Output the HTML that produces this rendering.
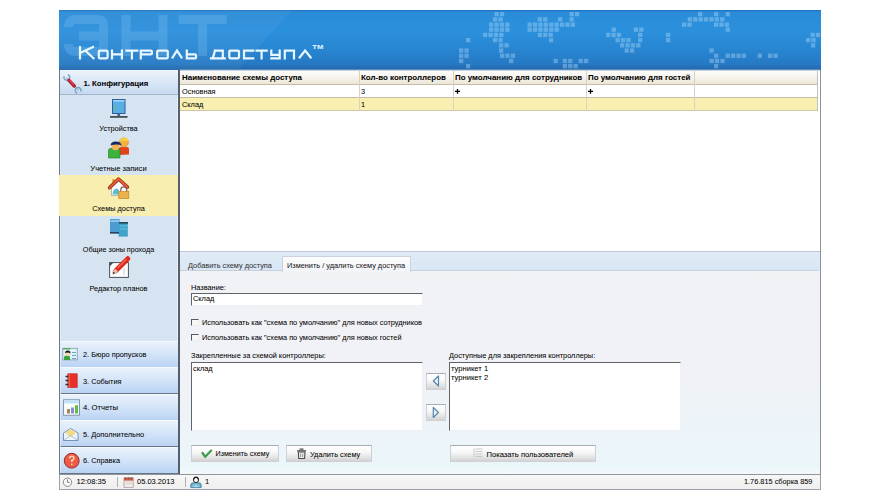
<!DOCTYPE html>
<html><head><meta charset="utf-8">
<style>
*{margin:0;padding:0;box-sizing:border-box}
html,body{width:880px;height:500px;overflow:hidden;background:#fff;font-family:"Liberation Sans",sans-serif;color:#111}
.a{position:absolute}
.t{position:absolute;white-space:nowrap;font-size:7.35px;line-height:9px;color:#000;-webkit-text-stroke:0.04px #000}
.b{font-weight:bold;font-size:7.95px}
.c{left:59px;width:119px;text-align:center}
#win{left:59px;top:10px;width:762px;height:480px;background:#f0f2f7;border:1px solid #8a9199;border-top:none}
#hdr{left:59px;top:10px;width:762px;height:60px;background:linear-gradient(#1f72bb 0,#2a8cd8 2px,#2b90dc 35%,#2886d2 65%,#2679c4 90%,#236fb6 95%,#2068ac 100%);overflow:hidden}
#side{left:59px;top:70px;width:119px;height:404px;background:#d6e3f0}
#sideline{left:178px;top:70px;width:2px;height:404px;background:#56606c}
#cfg{left:59px;top:70px;width:119px;height:25px;background:linear-gradient(#edf3fb,#dce8f6 45%,#c6d9f0);border-bottom:1px solid #a3b6ce}
.btn{position:absolute;left:59px;width:119px;height:27px;background:linear-gradient(#e9f1fb,#d8e7f9 40%,#bad3f3);border-top:1px solid #f6f9fd;border-bottom:1px solid #687585}
#grid{left:180px;top:70px;width:640px;height:182px;background:#fff;border-bottom:1px solid #bfc8d4}
.gh{position:absolute;top:71px;height:14px;background:linear-gradient(#fdfdfb,#f6f3ec 50%,#ece6d8);border-bottom:1px solid #c5bca4}
.gsep{position:absolute;width:1px;background:#d6d2c4}
#tabs{left:180px;top:252px;width:640px;height:19px;background:linear-gradient(#e1ebf7,#d9e6f5)}
#form{left:180px;top:271px;width:640px;height:203px;background:linear-gradient(#f1f2f6 0,#f0f2f7 110px,#ecf4f9 158px,#ebf6fa 195px,#f3f8fa 100%)}
#status{left:59px;top:474px;width:762px;height:16px;background:linear-gradient(#f7f7f7,#efefef);border:1px solid #9aa1a8;border-top-color:#8e959c}
.tb{position:absolute;background:#fff;border:1px solid #eef0f3;border-top:1px solid #5f646a;border-left:1px solid #5f646a}
.pb{position:absolute;height:16px;border:1px solid #cdd0d4;border-top-color:#a9adb3;background:linear-gradient(#ffffff,#f8f8f8 40%,#e4e4e4 75%,#d2d2d2);}
.cb{position:absolute;width:8px;height:7px;background:#f7f7f8;border:1px solid #eceef2;border-top-color:#55595e;border-left-color:#55595e}
</style></head><body>
<div class="a" id="win"></div>
<div class="a" id="hdr"></div>
<svg class="a" style="left:59px;top:10px" width="762" height="60" viewBox="59 10 762 60">
 <defs><linearGradient id="hg" x1="0" y1="0" x2="1" y2="0"><stop offset="0" stop-color="#fff" stop-opacity="0.05"/><stop offset="0.5" stop-color="#fff" stop-opacity="0.0"/></linearGradient></defs>
 <path d="M59 10 H292 L238 70 H59 Z" fill="#ffffff" fill-opacity="0.045"/>
 <g fill="none" stroke="#86c6f4" opacity="0.27" stroke-width="9" stroke-linejoin="round">
  <path d="M68.5 27 Q68.5 19.5 76 19.5 H98 Q103.5 19.5 103.5 25 V46 Q103.5 51.5 98 51.5 H76 Q68.5 51.5 68.5 44"/>
  <path d="M79 36 H103"/>
  <path d="M126 15 V56 M163 15 V56 M126 36 H163"/>
  <path d="M178.6 19.5 H226.7 M202.6 15 V56" stroke-linejoin="miter"/>
 </g>
 <g fill="#a9d6f8" fill-opacity="0.42">
<rect x="494.5" y="12.0" width="4.3" height="4.3"/>
<rect x="499.9" y="12.0" width="4.3" height="4.3"/>
<rect x="569.5" y="12.0" width="4.3" height="4.3"/>
<rect x="574.9" y="12.0" width="4.3" height="4.3"/>
<rect x="698.0" y="12.0" width="4.3" height="4.3"/>
<rect x="714.0" y="12.0" width="4.3" height="4.3"/>
<rect x="725.6" y="12.0" width="4.3" height="4.3"/>
<rect x="493.0" y="17.2" width="4.3" height="4.3"/>
<rect x="498.4" y="17.2" width="4.3" height="4.3"/>
<rect x="537.7" y="17.2" width="4.3" height="4.3"/>
<rect x="543.1" y="17.2" width="4.3" height="4.3"/>
<rect x="558.0" y="17.2" width="4.3" height="4.3"/>
<rect x="569.5" y="17.2" width="4.3" height="4.3"/>
<rect x="687.7" y="17.2" width="4.3" height="4.3"/>
<rect x="693.1" y="17.2" width="4.3" height="4.3"/>
<rect x="698.5" y="17.2" width="4.3" height="4.3"/>
<rect x="703.9" y="17.2" width="4.3" height="4.3"/>
<rect x="709.3" y="17.2" width="4.3" height="4.3"/>
<rect x="714.7" y="17.2" width="4.3" height="4.3"/>
<rect x="720.1" y="17.2" width="4.3" height="4.3"/>
<rect x="489.0" y="22.5" width="4.3" height="4.3"/>
<rect x="494.4" y="22.5" width="4.3" height="4.3"/>
<rect x="499.8" y="22.5" width="4.3" height="4.3"/>
<rect x="505.2" y="22.5" width="4.3" height="4.3"/>
<rect x="527.5" y="22.5" width="4.3" height="4.3"/>
<rect x="532.9" y="22.5" width="4.3" height="4.3"/>
<rect x="538.3" y="22.5" width="4.3" height="4.3"/>
<rect x="543.7" y="22.5" width="4.3" height="4.3"/>
<rect x="549.1" y="22.5" width="4.3" height="4.3"/>
<rect x="554.5" y="22.5" width="4.3" height="4.3"/>
<rect x="559.9" y="22.5" width="4.3" height="4.3"/>
<rect x="565.3" y="22.5" width="4.3" height="4.3"/>
<rect x="570.7" y="22.5" width="4.3" height="4.3"/>
<rect x="682.0" y="22.5" width="4.3" height="4.3"/>
<rect x="687.4" y="22.5" width="4.3" height="4.3"/>
<rect x="714.0" y="22.5" width="4.3" height="4.3"/>
<rect x="719.4" y="22.5" width="4.3" height="4.3"/>
<rect x="724.8" y="22.5" width="4.3" height="4.3"/>
<rect x="489.0" y="27.5" width="4.3" height="4.3"/>
<rect x="494.4" y="27.5" width="4.3" height="4.3"/>
<rect x="499.8" y="27.5" width="4.3" height="4.3"/>
<rect x="505.2" y="27.5" width="4.3" height="4.3"/>
<rect x="527.5" y="27.5" width="4.3" height="4.3"/>
<rect x="532.9" y="27.5" width="4.3" height="4.3"/>
<rect x="538.3" y="27.5" width="4.3" height="4.3"/>
<rect x="543.7" y="27.5" width="4.3" height="4.3"/>
<rect x="549.1" y="27.5" width="4.3" height="4.3"/>
<rect x="554.5" y="27.5" width="4.3" height="4.3"/>
<rect x="611.6" y="27.5" width="4.3" height="4.3"/>
<rect x="633.8" y="27.5" width="4.3" height="4.3"/>
<rect x="639.2" y="27.5" width="4.3" height="4.3"/>
<rect x="725.6" y="27.5" width="4.3" height="4.3"/>
<rect x="483.0" y="32.8" width="4.3" height="4.3"/>
<rect x="488.4" y="32.8" width="4.3" height="4.3"/>
<rect x="493.8" y="32.8" width="4.3" height="4.3"/>
<rect x="499.2" y="32.8" width="4.3" height="4.3"/>
<rect x="537.7" y="32.8" width="4.3" height="4.3"/>
<rect x="543.1" y="32.8" width="4.3" height="4.3"/>
<rect x="548.5" y="32.8" width="4.3" height="4.3"/>
<rect x="606.0" y="32.8" width="4.3" height="4.3"/>
<rect x="611.4" y="32.8" width="4.3" height="4.3"/>
<rect x="616.8" y="32.8" width="4.3" height="4.3"/>
<rect x="638.0" y="32.8" width="4.3" height="4.3"/>
<rect x="666.0" y="32.8" width="4.3" height="4.3"/>
<rect x="810.5" y="32.8" width="4.3" height="4.3"/>
<rect x="815.9" y="32.8" width="4.3" height="4.3"/>
<rect x="466.0" y="38.0" width="4.3" height="4.3"/>
<rect x="493.0" y="38.0" width="4.3" height="4.3"/>
<rect x="498.4" y="38.0" width="4.3" height="4.3"/>
<rect x="549.0" y="38.0" width="4.3" height="4.3"/>
<rect x="615.5" y="38.0" width="4.3" height="4.3"/>
<rect x="620.9" y="38.0" width="4.3" height="4.3"/>
<rect x="626.3" y="38.0" width="4.3" height="4.3"/>
<rect x="638.0" y="38.0" width="4.3" height="4.3"/>
<rect x="666.0" y="38.0" width="4.3" height="4.3"/>
<rect x="806.0" y="38.0" width="4.3" height="4.3"/>
<rect x="811.4" y="38.0" width="4.3" height="4.3"/>
<rect x="499.0" y="43.2" width="4.3" height="4.3"/>
<rect x="504.4" y="43.2" width="4.3" height="4.3"/>
<rect x="620.0" y="43.2" width="4.3" height="4.3"/>
<rect x="625.4" y="43.2" width="4.3" height="4.3"/>
<rect x="630.8" y="43.2" width="4.3" height="4.3"/>
<rect x="636.2" y="43.2" width="4.3" height="4.3"/>
<rect x="811.0" y="43.2" width="4.3" height="4.3"/>
<rect x="459.0" y="48.4" width="4.3" height="4.3"/>
<rect x="464.4" y="48.4" width="4.3" height="4.3"/>
<rect x="499.0" y="48.4" width="4.3" height="4.3"/>
<rect x="624.6" y="48.4" width="4.3" height="4.3"/>
<rect x="630.0" y="48.4" width="4.3" height="4.3"/>
<rect x="709.5" y="48.4" width="4.3" height="4.3"/>
<rect x="459.0" y="53.6" width="4.3" height="4.3"/>
<rect x="464.4" y="53.6" width="4.3" height="4.3"/>
<rect x="500.0" y="53.6" width="4.3" height="4.3"/>
<rect x="505.4" y="53.6" width="4.3" height="4.3"/>
<rect x="510.8" y="53.6" width="4.3" height="4.3"/>
<rect x="714.0" y="53.6" width="4.3" height="4.3"/>
<rect x="725.6" y="53.6" width="4.3" height="4.3"/>
<rect x="731.0" y="53.6" width="4.3" height="4.3"/>
<rect x="736.4" y="53.6" width="4.3" height="4.3"/>
<rect x="741.8" y="53.6" width="4.3" height="4.3"/>
<rect x="757.7" y="53.6" width="4.3" height="4.3"/>
<rect x="768.0" y="53.6" width="4.3" height="4.3"/>
<rect x="773.4" y="53.6" width="4.3" height="4.3"/>
<rect x="459.0" y="58.8" width="4.3" height="4.3"/>
<rect x="509.0" y="58.8" width="4.3" height="4.3"/>
<rect x="553.6" y="58.8" width="4.3" height="4.3"/>
<rect x="562.7" y="58.8" width="4.3" height="4.3"/>
<rect x="568.1" y="58.8" width="4.3" height="4.3"/>
<rect x="578.6" y="58.8" width="4.3" height="4.3"/>
<rect x="584.0" y="58.8" width="4.3" height="4.3"/>
<rect x="709.5" y="58.8" width="4.3" height="4.3"/>
<rect x="714.9" y="58.8" width="4.3" height="4.3"/>
<rect x="720.3" y="58.8" width="4.3" height="4.3"/>
<rect x="466.0" y="64.0" width="4.3" height="4.3"/>
<rect x="562.7" y="64.0" width="4.3" height="4.3"/>
<rect x="568.1" y="64.0" width="4.3" height="4.3"/>
<rect x="573.5" y="64.0" width="4.3" height="4.3"/>
<rect x="714.0" y="64.0" width="4.3" height="4.3"/>
 </g>
 <g fill="none" stroke="#e6f7ff" stroke-width="2.2" stroke-linejoin="miter" stroke-linecap="square">
  <path d="M80 47 V58.3 M80 53 L93 47 M85.5 50.8 L93.5 58.3"/>
  <rect x="98.8" y="50.6" width="8.8" height="7.7" rx="1"/>
  <path d="M112 50.6 V58.3 M121.9 50.6 V58.3 M112 54.4 H121.9"/>
  <path d="M126.5 50.6 H137.3 M131.9 50.6 V58.3"/>
  <path d="M140.8 58.3 V50.6 H150.9 Q151.9 50.6 151.9 51.6 V53.4 Q151.9 54.4 150.9 54.4 H140.8"/>
  <rect x="157.2" y="50.6" width="10.6" height="7.7" rx="1"/>
  <path d="M172 58.3 L177 50.6 L182.1 58.3" stroke-linecap="butt"/>
  <path d="M186.8 50.6 V58.3 H195.2 Q196 58.3 196 57.5 V55.2 Q196 54.4 195.2 54.4 H186.8"/>
  <path d="M211 58.3 H224.8 M222.8 50.6 V58.3 M215 50.6 H222.8 M215 50.6 L212.8 58.3"/>
  <rect x="229.3" y="50.6" width="9.7" height="7.7" rx="1"/>
  <path d="M253.2 50.6 H244 V58.3 H253.2"/>
  <path d="M256.5 50.6 H266.7 M261.6 50.6 V58.3"/>
  <path d="M271.3 50.6 V54.8 H279.7 M279.7 50.6 V58.3 H271.3"/>
  <path d="M284.8 58.3 V50.6 H294 V58.3"/>
  <path d="M299 58.3 L305.1 50.6 L311.3 58.3" stroke-linecap="butt"/>
 </g>
 <text x="312.3" y="49" fill="#e6f7ff" font-family="Liberation Sans" font-weight="bold" font-size="5.6" textLength="11" lengthAdjust="spacingAndGlyphs">TM</text>
</svg>
<div class="a" id="side"></div>
<div class="a" id="sideline"></div>
<div class="a" style="left:177px;top:95px;width:1px;height:379px;background:#eef3f9;opacity:0.8"></div>

<div class="a" id="cfg"></div>
<div class="t b" style="left:83.5px;top:78.5px;font-size:7.75px">1. Конфигурация</div>

<!-- wrench -->
<svg class="a" style="left:61px;top:72px" width="22" height="24" viewBox="61 72 22 24">
 <path d="M66.5 77.5 L78.5 90.5" stroke="#a9c6da" stroke-width="1.6" fill="none"/>
 <path d="M64.2 76.2 A2.9 2.9 0 1 0 67.8 74.6" fill="none" stroke="#7aa6c4" stroke-width="1.5"/>
 <path d="M80.8 91.6 A2.9 2.9 0 1 0 77.2 93.2" fill="none" stroke="#7aa6c4" stroke-width="1.5"/>
 <path d="M69 80.3 L74.3 86" stroke="#b8202e" stroke-width="3.4" stroke-linecap="round"/>
 <path d="M69.6 80.2 L73.6 84.6" stroke="#e46a78" stroke-width="0.9" stroke-linecap="round"/>
</svg>

<div class="btn" style="top:341px"></div>
<div class="btn" style="top:367px"></div>
<div class="btn" style="top:394px"></div>
<div class="btn" style="top:420px"></div>
<div class="btn" style="top:447px"></div>
<div class="a" style="left:59px;top:70px;width:1px;height:404px;background:#6f7a86"></div>
<div class="a" style="left:60px;top:95px;width:1px;height:378px;background:#e6eef7;opacity:0.7"></div>

<div class="a" id="grid"></div>
<div class="a" style="left:180px;top:69px;width:640px;height:1px;background:#5f8db8"></div>
<div class="a" style="left:180px;top:70px;width:640px;height:1px;background:#c4d4e4"></div>
<!-- grid header -->
<div class="gh" style="left:180px;width:179px"></div>
<div class="gh" style="left:359px;width:94px"></div>
<div class="gh" style="left:453px;width:133px"></div>
<div class="gh" style="left:586px;width:108px"></div>
<div class="gh" style="left:694px;width:124px"></div>
<div class="a" style="left:180px;top:97px;width:638px;height:1px;background:#c2bba6"></div>
<div class="a" style="left:180px;top:98px;width:638px;height:13px;background:#f9efb0;border-bottom:1px solid #cfc7a8"></div>
<div class="gsep" style="left:359px;top:71px;height:40px"></div>
<div class="gsep" style="left:453px;top:71px;height:40px"></div>
<div class="gsep" style="left:586px;top:71px;height:40px"></div>
<div class="gsep" style="left:694px;top:71px;height:40px"></div>
<div class="a" style="left:817px;top:71px;width:1px;height:40px;background:#c0c0c0"></div>
<div class="t b" style="left:182px;top:73px">Наименование схемы доступа</div>
<div class="t b" style="left:361px;top:73px">Кол-во контроллеров</div>
<div class="t b" style="left:455px;top:73px">По умолчанию для сотрудников</div>
<div class="t b" style="left:588px;top:73px">По умолчанию для гостей</div>
<div class="t" style="left:182px;top:87px">Основная</div>
<div class="t" style="left:361px;top:87px">3</div>
<svg class="a" style="left:454px;top:88px" width="7" height="7" viewBox="454 88 7 7"><path d="M455 91.4 H460 M457.5 89 V93.8" stroke="#000" stroke-width="1.3"/></svg>
<svg class="a" style="left:587px;top:88px" width="7" height="7" viewBox="587 88 7 7"><path d="M588 91.4 H593 M590.5 89 V93.8" stroke="#000" stroke-width="1.3"/></svg>
<div class="t" style="left:182px;top:100px">Склад</div>
<div class="t" style="left:361px;top:100px">1</div>

<div class="a" id="tabs"></div>
<div class="a" id="form"></div>
<!-- tabs -->
<div class="a" style="left:180px;top:270px;width:638px;height:1px;background:#c9d0da"></div>
<div class="a" style="left:282px;top:256px;width:129px;height:16px;background:linear-gradient(#fbfcfd,#f2f4f8);border:1px solid #c9d1dc;border-bottom:none"></div>
<div class="t" style="left:188px;top:261px;color:#333;-webkit-text-stroke-color:#333">Добавить схему доступа</div>
<div class="t" style="left:287px;top:261px;color:#222">Изменить / удалить схему доступа</div>
<!-- form -->
<div class="t" style="left:191px;top:283px">Название:</div>
<div class="tb" style="left:191px;top:293px;width:232px;height:13px"></div>
<div class="t" style="left:193px;top:294px">Склад</div>
<div class="cb" style="left:191px;top:319px"></div>
<div class="t" style="left:202px;top:318px">Использовать как "схема по умолчанию" для новых сотрудников</div>
<div class="cb" style="left:191px;top:334px"></div>
<div class="t" style="left:202px;top:333px">Использовать как "схема по умолчанию" для новых гостей</div>
<div class="t" style="left:191px;top:351px">Закрепленные за схемой контроллеры:</div>
<div class="tb" style="left:191px;top:362px;width:232px;height:69px"></div>
<div class="t" style="left:193px;top:364px">склад</div>
<div class="t" style="left:449px;top:351px">Доступные для закрепления контроллеры:</div>
<div class="tb" style="left:449px;top:362px;width:232px;height:69px"></div>
<div class="t" style="left:451px;top:364px;font-size:7.6px">турникет 1</div>
<div class="t" style="left:451px;top:373px;font-size:7.6px">турникет 2</div>
<div class="pb" style="left:426px;top:373px;width:20px;height:17px"></div>
<div class="pb" style="left:426px;top:404px;width:20px;height:17px"></div>
<svg class="a" style="left:426px;top:373px" width="20" height="48" viewBox="426 373 20 48">
 <path d="M433.3 381 L438.5 376 V386 Z" fill="#e8f0f8" stroke="#5b86ad" stroke-width="1.2" stroke-linejoin="round"/>
 <path d="M438.5 412.5 L433.3 407.5 V417.5 Z" fill="#e8f0f8" stroke="#5b86ad" stroke-width="1.2" stroke-linejoin="round"/>
</svg>
<div class="pb" style="left:191px;top:445px;width:88px;height:17px"></div>
<div class="t" style="left:215.5px;top:450px;font-size:7.15px">Изменить схему</div>
<div class="pb" style="left:286px;top:445px;width:86px;height:17px"></div>
<div class="t" style="left:310px;top:450px">Удалить схему</div>
<div class="pb" style="left:450px;top:445px;width:146px;height:17px"></div>
<div class="t" style="left:486.5px;top:450px;font-size:7.6px">Показать пользователей</div>
<svg class="a" style="left:195px;top:443px" width="420" height="20" viewBox="195 443 420 20">
 <path d="M202.5 453 L205.2 456.8 L211.2 450.6" fill="none" stroke="#3f9a4c" stroke-width="2.2" stroke-linecap="round" stroke-linejoin="round"/>
 <path d="M297 450.8 H306 M299.5 449.2 H303.5" stroke="#4a4a4a" stroke-width="1.3"/>
 <path d="M298.3 452 H305 L304.6 458.5 H298.7 Z" fill="#f2f2f2" stroke="#4a4a4a" stroke-width="1.1"/>
 <path d="M300.6 453.5 V457 M302.7 453.5 V457" stroke="#777" stroke-width="0.8"/>
 <path d="M474 448.5 V457.5 M475.5 449 H482.5 M475.5 451.5 H482.5 M475.5 454 H482.5 M475.5 456.5 H482.5" stroke="#c4c8cc" stroke-width="1"/>
</svg>
<!-- status -->
<div class="a" id="status"></div>
<svg class="a" style="left:59px;top:474px" width="160" height="16" viewBox="59 474 160 16">
 <circle cx="67.5" cy="482.2" r="4.2" fill="#fafafa" stroke="#8a8a8a" stroke-width="1"/>
 <path d="M67.5 479.5 V482.4 H69.8" fill="none" stroke="#777" stroke-width="0.9"/>
 <rect x="124" y="477.8" width="9.2" height="9.5" fill="#f2efee" stroke="#a89a98" stroke-width="0.8"/>
 <rect x="124" y="477.8" width="9.2" height="2.8" fill="#c85a4a"/>
 <path d="M126 477 V479 M128.6 477 V479 M131.2 477 V479" stroke="#7a4a40" stroke-width="0.7"/>
 <path d="M125.5 482 H132 M125.5 484 H132" stroke="#c9b0aa" stroke-width="0.6"/>
 <path d="M190.8 487.6 V485 Q190.8 482.8 193.5 482.8 H198.5 Q201.2 482.8 201.2 485 V487.6 Z" fill="#5fb0cc" stroke="#2f7090" stroke-width="0.7"/>
 <path d="M192.5 485 H199.5 M192.5 486.5 H199.5 M196 483.5 V487.5" stroke="#d8f0f8" stroke-width="0.5"/>
 <circle cx="196" cy="480" r="2.6" fill="#f4f4f4" stroke="#2a2a2a" stroke-width="1"/>
 <path d="M193.6 479.5 Q194 477 196 477 Q198 477 198.4 479.5" fill="none" stroke="#1a1a1a" stroke-width="1.2"/>
</svg>
<div class="t" style="left:76.5px;top:477px;font-size:7.6px">12:08:35</div>
<div class="a" style="left:117px;top:477px;width:1px;height:10px;background:#b0b0b0"></div>
<div class="t" style="left:137px;top:477px;font-size:7.5px">05.03.2013</div>
<div class="a" style="left:185px;top:477px;width:1px;height:10px;background:#b0b0b0"></div>
<div class="t" style="left:205px;top:477px;font-size:7.6px">1</div>
<div class="t" style="left:744px;top:477px">1.76.815 сборка 859</div>
<!-- sidebar items -->
<div class="a" style="left:59px;top:175px;width:119px;height:41px;background:#f8eeb0"></div>
<svg class="a" style="left:59px;top:95px" width="119" height="375" viewBox="59 95 119 375">
 <!-- devices -->
 <rect x="112.5" y="99.5" width="12.5" height="14" fill="#5aaee6" stroke="#2e5e96" stroke-width="1"/>
 <rect x="113" y="100" width="11.5" height="1.6" fill="#9fd6f6"/>
 <rect x="114.5" y="106" width="1.5" height="1.5" fill="#6bbf50"/><rect x="114.5" y="109" width="1.5" height="1.5" fill="#6bbf50"/>
 <rect x="117.3" y="113.5" width="2.8" height="2.5" fill="#3f6d9a"/>
 <rect x="110" y="116" width="17.5" height="1.8" fill="#474c52"/>
 <!-- users -->
 <path d="M118.5 155 V149 Q118.5 147 121 147 H127 Q129 147 129 149 V154.5 Z" fill="#e04418"/>
 <circle cx="123.8" cy="142.5" r="4.6" fill="#f4b040" stroke="#c88a20" stroke-width="0.6"/>
 <path d="M119.5 141 Q120.5 137.5 124 137.5 Q128 137.5 128.5 141 Z" fill="#f5d040"/>
 <path d="M108.5 158 V150.5 Q108.5 148.5 110.5 148.5 H118 Q120 148.5 120 150.5 V158 Z" fill="#3cb43c" stroke="#1f7a1f" stroke-width="0.6"/>
 <circle cx="115.5" cy="146" r="4.2" fill="#f3b35a"/>
 <path d="M110.6 145.2 Q111 141.6 115.8 141.6 Q121 141.6 121.5 145.5 Q118 143.8 110.6 145.2 Z" fill="#142a66"/>
 <!-- house -->
 <path d="M111.5 187.5 V195.5 H126.5 V187.5 L119 181 Z" fill="#fbfbfd" stroke="#8a8fa0" stroke-width="0.6"/>
 <path d="M112.5 194.5 Q113 189 116.5 188.5 Q119 188.5 119 191 V194.5 Z" fill="#5cc0c8"/>
 <rect x="112.5" y="179" width="2" height="4" fill="#e08a30"/>
 <path d="M109.5 187.8 L118.5 179 L127.5 187" fill="none" stroke="#9a2a10" stroke-width="3.4" stroke-linejoin="round" stroke-linecap="round"/>
 <path d="M109.5 187.8 L118.5 179 L127.5 187" fill="none" stroke="#e8603a" stroke-width="1.8" stroke-linejoin="round" stroke-linecap="round"/>
 <path d="M120.8 191.5 V189.6 Q120.8 186.8 123.7 186.8 Q126.6 186.8 126.6 189.6 V191.5" fill="none" stroke="#8a5a5a" stroke-width="1.2"/>
 <rect x="118.8" y="191.5" width="10" height="7" fill="#eab248" stroke="#b8862a" stroke-width="0.7"/>
 <!-- zones -->
 <rect x="110" y="219" width="9.6" height="14.4" fill="#4c9bd2"/>
 <rect x="110.5" y="220" width="8.5" height="2" fill="#8cc6ec"/>
 <rect x="118.6" y="222" width="9.2" height="14.6" fill="#3ea2ca"/>
 <path d="M119 222.8 H128 M110 232.8 H119" stroke="#1e2a3a" stroke-width="1.2"/>
 <path d="M120 226 H127 M120 229 H127" stroke="#7ccbe6" stroke-width="0.8"/>
 <!-- editor -->
 <rect x="109.6" y="262.6" width="18.8" height="14.8" fill="#fdfdfe" stroke="#4a5058" stroke-width="1"/>
 <path d="M109.6 266.5 L113.5 262.6 H109.6 Z" fill="#4a4a5a"/>
 <path d="M113 270 V275 M124 268 V275" stroke="#b8c0c8" stroke-width="0.8"/>
 <path d="M116 270.5 L127.8 258.7" stroke="#e02a20" stroke-width="5" stroke-linecap="round"/>
 <path d="M117.5 268 L126.5 259" stroke="#f86a50" stroke-width="1.2"/>
 <path d="M113.8 273 L116.6 270" stroke="#f2b8a8" stroke-width="3.4"/>
 <path d="M113.2 273.6 L114.4 272.4" stroke="#333" stroke-width="1.6"/>
 <!-- btn icons -->
 <rect x="62.8" y="348.3" width="14.5" height="11.6" fill="#def3f8" stroke="#7f98b0" stroke-width="0.8"/>
 <rect x="62.8" y="348" width="7.5" height="1.5" fill="#5aaa60"/>
 <path d="M64 360 V357.5 Q64 355.5 67 355.5 Q70 355.5 70 357.5 V360 Z" fill="#3aa43a"/>
 <circle cx="67.5" cy="353.5" r="2.5" fill="#f2d8b0"/>
 <path d="M65 353 Q65 350.5 67.8 350.5 Q70.5 350.5 70.5 353.5 Q68 351.8 65 353 Z" fill="#1a1a1a"/>
 <path d="M72 352.5 H76 M72 355.5 H76 M72 358.5 H76" stroke="#6fa0b8" stroke-width="1.2"/>
 <rect x="67.8" y="373.8" width="9.4" height="13.7" fill="#e8302a" stroke="#b82020" stroke-width="0.6"/>
 <rect x="68.5" y="374.5" width="1.5" height="12.5" fill="#f06048"/>
 <path d="M65.5 376.5 H68.5 M65.5 380.5 H68.5 M65.5 384.5 H68.5" stroke="#2a2a3a" stroke-width="1.3"/>
 <rect x="63.6" y="399.8" width="15.8" height="15.4" fill="#fbfcfe" stroke="#6f8aa4" stroke-width="0.9"/>
 <rect x="64.2" y="400.4" width="14.6" height="3" fill="#bfe0f8"/>
 <rect x="67" y="409" width="3" height="4.5" fill="#a8845a"/>
 <rect x="71" y="407.5" width="3" height="6" fill="#8a8ae0"/>
 <rect x="75" y="405.2" width="3" height="8.3" fill="#5cc040"/>
 <path d="M63.5 433 L70.7 428.5 L78 433 V440.5 H63.5 Z" fill="#eef6fc" stroke="#6a8aa8" stroke-width="0.9"/>
 <path d="M65.5 433.5 Q70 426 76 433 L70.7 437 Z" fill="#f0dc88"/>
 <path d="M63.8 440.2 L70.7 435.5 L77.8 440.2" fill="none" stroke="#8aa6bc" stroke-width="0.7"/>
 <circle cx="71.7" cy="460.7" r="7.4" fill="#ec5a48" stroke="#9a2a2a" stroke-width="1"/>
 <path d="M69.7 458.5 Q69.7 456.3 71.8 456.3 Q73.9 456.3 73.9 458.3 Q73.9 459.6 71.8 460.5 V462" fill="none" stroke="#fbd8b0" stroke-width="1.6"/>
 <circle cx="71.8" cy="464.3" r="0.9" fill="#fbd8b0"/>
</svg>
<div class="t c" style="top:124px">Устройства</div>
<div class="t c" style="top:164px;font-size:7.6px">Учетные записи</div>
<div class="t c" style="top:204px">Схемы доступа</div>
<div class="t c" style="top:245px;font-size:7.2px">Общие зоны прохода</div>
<div class="t c" style="top:284px">Редактор планов</div>
<div class="t" style="left:83px;top:350px">2. Бюро пропусков</div>
<div class="t" style="left:83px;top:377px">3. События</div>
<div class="t" style="left:83px;top:403px;font-size:7.7px">4. Отчеты</div>
<div class="t" style="left:83px;top:430px">5. Дополнительно</div>
<div class="t" style="left:83px;top:456px">6. Справка</div>
</body></html>
